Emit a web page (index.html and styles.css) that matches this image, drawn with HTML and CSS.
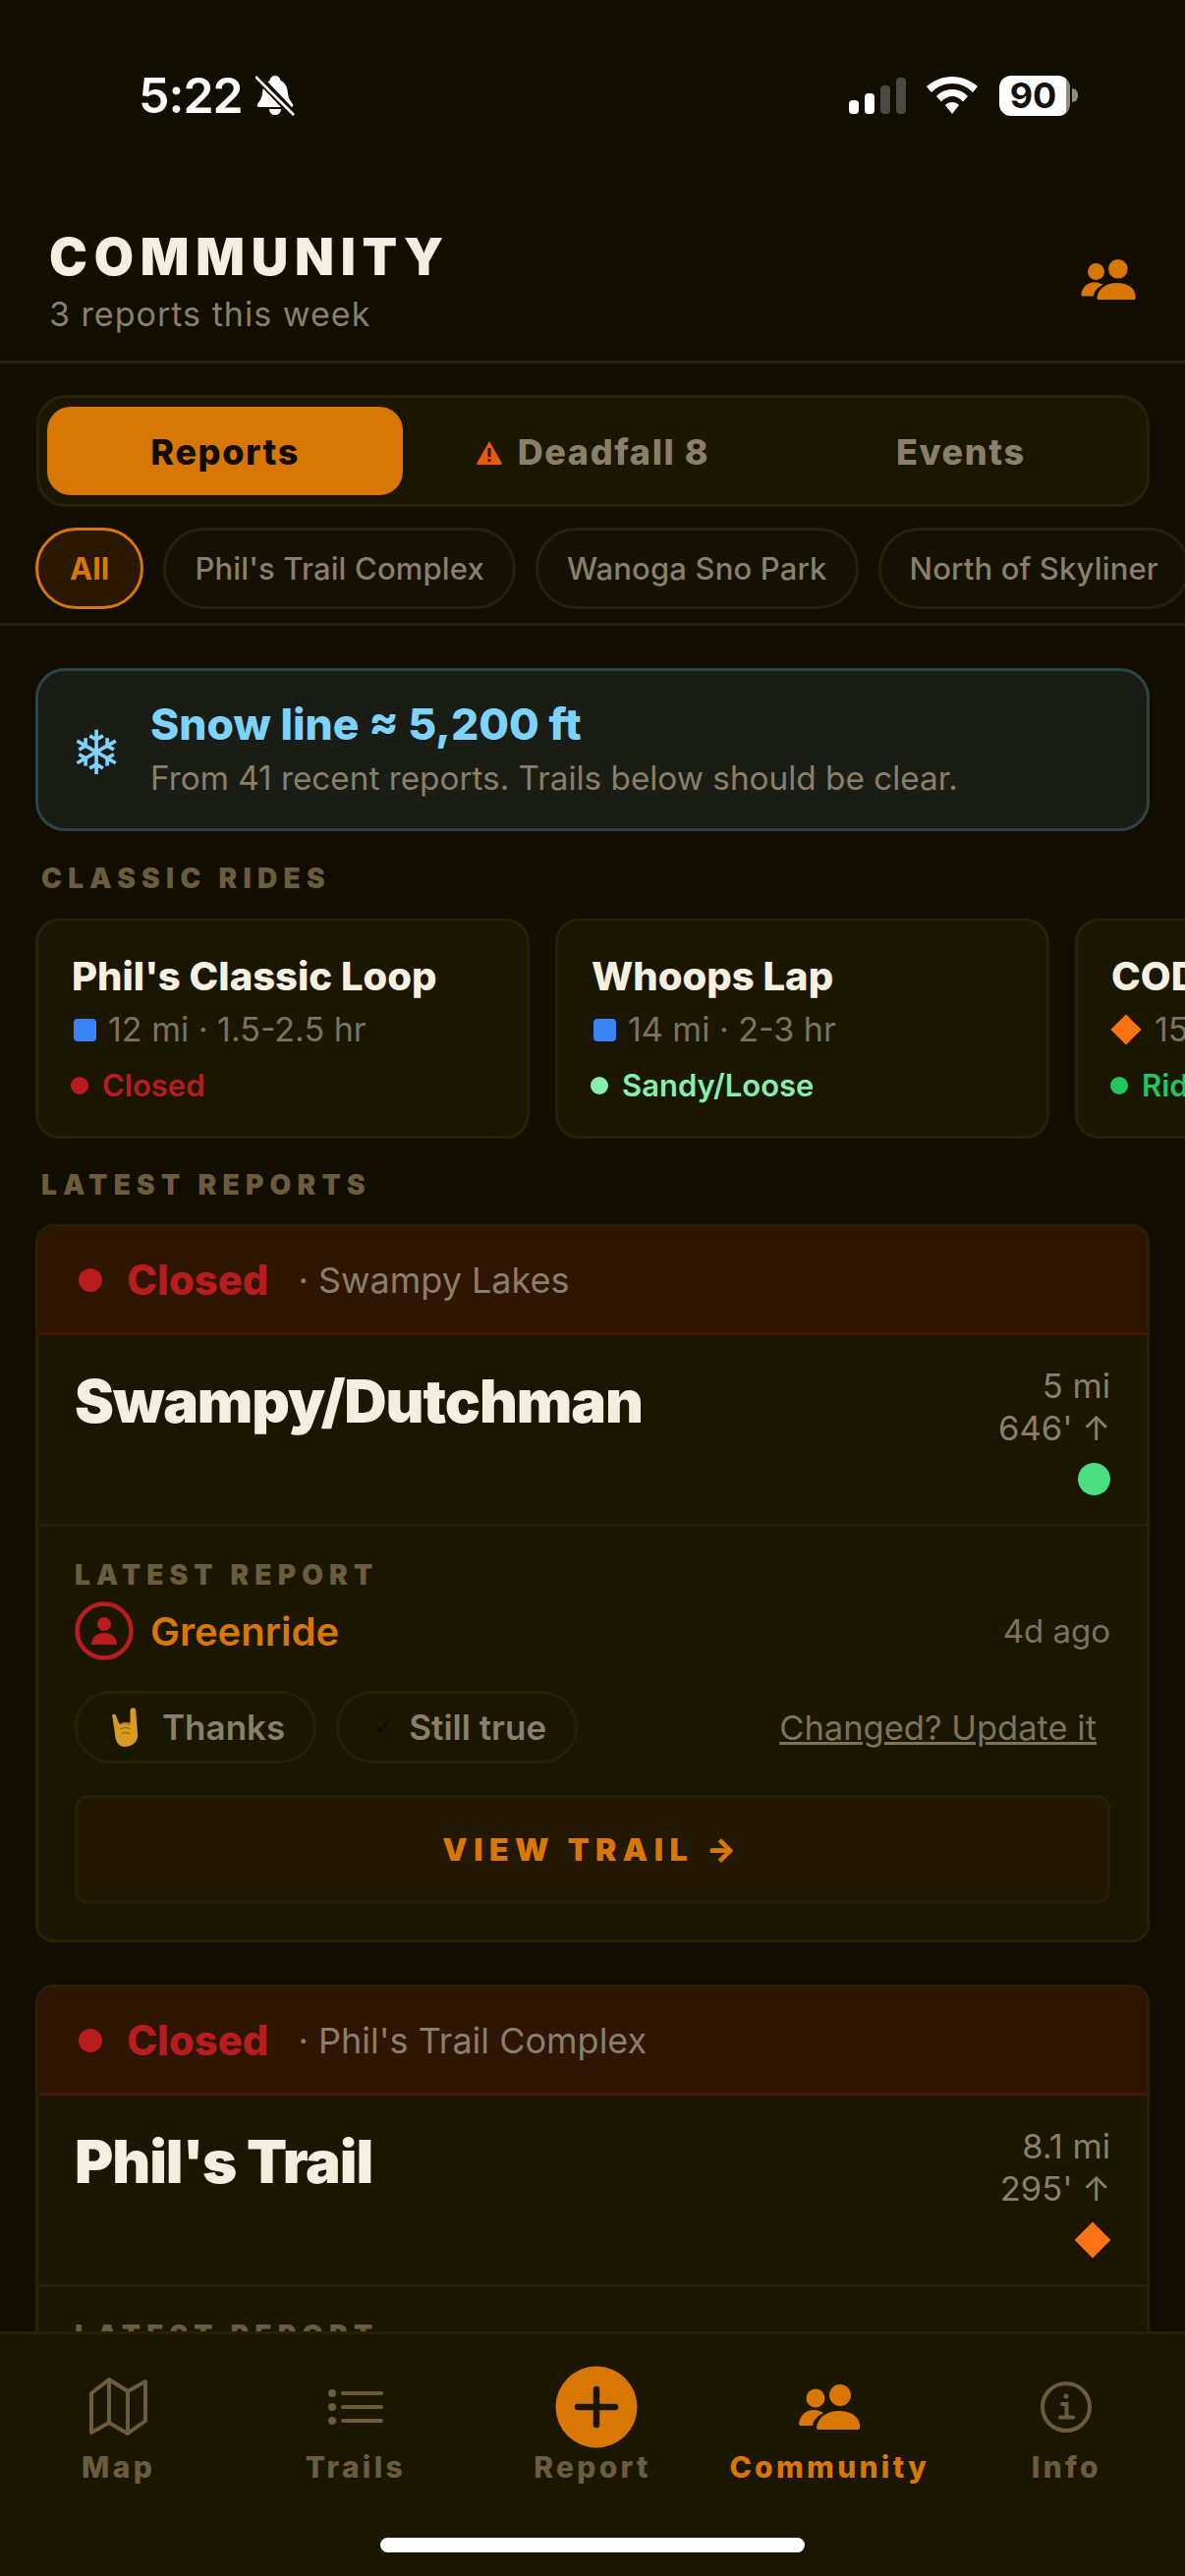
FILE: index.html
```html
<!DOCTYPE html>
<html lang="en">
<head>
<meta charset="UTF-8">
<meta name="viewport" content="width=device-width, initial-scale=1">
<title>Community</title>
<link rel="stylesheet" href="styles.css">
</head>
<body>
<div class="app">
	<div class="status">
		<div class="status-left">
			<span class="clock">5:22</span>
			<svg class="bell" width="40" height="42" viewBox="0 0 40 42"><path d="M20 1c3 0 5 2 5.500 5 5 2 7 7 7.500 13 .5 5 2 7 5 11 1 2 0 3-2 3H4c-2 0-3-1-2-3 3-4 4.500-6 5-11 .5-6 2.500-11 7.500-13C15 3 17 1 20 1zM14 35h12c0 4-3 6-6 6s-6-2-6-6z" fill="#fff"/><path d="M1 1l38 40" stroke="#120d01" stroke-width="8"/><path d="M0 2l39 39" stroke="#fff" stroke-width="2.600"/></svg>
		</div>
		<div class="status-right">
			<div class="signal"><i class="bar bar-1"></i><i class="bar bar-2"></i><i class="bar bar-3"></i><i class="bar bar-4"></i></div>
			<svg class="wifi" width="52" height="38" viewBox="0 0 52 38"><path d="M26 0c10 0 19 4 26 10l-5 6C41 10 34 7 26 7S11 10 5 16l-5-6C7 4 16 0 26 0z" fill="#fff"/><path d="M26 13c6 0 12 2.500 16 7l-5 5.500C34 22 30 20 26 20s-8 2-11 5.500L10 20c4-4.500 10-7 16-7z" fill="#fff"/><path d="M26 26c3 0 5 1 7 3l-7 9-7-9c2-2 4-3 7-3z" fill="#fff"/></svg>
			<div class="battery"><span class="battery-cell">90</span><i class="battery-nub"></i></div>
		</div>
	</div>

	<header class="head">
		<div>
			<h1 class="head-title">COMMUNITY</h1>
			<p class="head-sub">3 reports this week</p>
		</div>
		<svg class="head-icon" width="56" height="41" viewBox="0 0 62 46"><circle cx="17" cy="14" r="9.500"/><circle cx="42" cy="11" r="11"/><path d="M20 46c-1 0-2-1-2-2 1-10 10-17 23-17s22 7 21 17c0 1-1 2-2 2z"/><path d="M2 42c-1 0-2-1-2-2 1-8 7-14 15-14 4 0 7 1 10 3-6 3-10 7-11 13z"/></svg>
	</header>

	<div class="tabs">
		<div class="tab tab-on">Reports</div>
		<div class="tab"><svg class="warn" width="26" height="25" viewBox="0 0 26 25"><path d="M13 1l12.500 22c.5 1 0 2-1 2H1.500c-1 0-1.500-1-1-2z" fill="#ea580c"/><path d="M13 8v9" stroke="#2a1402" stroke-width="3"/><circle cx="13" cy="20.500" r="1.700" fill="#2a1402"/></svg>Deadfall 8</div>
		<div class="tab">Events</div>
	</div>

	<div class="chips">
		<div class="chip chip-on">All</div>
		<div class="chip">Phil's Trail Complex</div>
		<div class="chip">Wanoga Sno Park</div>
		<div class="chip">North of Skyliner</div>
	</div>

	<main class="feed">
		<section class="snow">
			<span class="snow-icon">❄</span>
			<div>
				<div class="snow-title">Snow line ≈ 5,200 ft</div>
				<div class="snow-sub">From 41 recent reports. Trails below should be clear.</div>
			</div>
		</section>

		<h2 class="label">CLASSIC RIDES</h2>
		<div class="rides">
			<div class="ride">
				<div class="ride-name">Phil's Classic Loop</div>
				<div class="ride-meta"><i class="blue-square"></i>12 mi · 1.5-2.5 hr</div>
				<div class="ride-status red"><i class="dot"></i>Closed</div>
			</div>
			<div class="ride">
				<div class="ride-name">Whoops Lap</div>
				<div class="ride-meta"><i class="blue-square"></i>14 mi · 2-3 hr</div>
				<div class="ride-status mint"><i class="dot"></i>Sandy/Loose</div>
			</div>
			<div class="ride">
				<div class="ride-name">COD Loop</div>
				<div class="ride-meta"><i class="small-diamond"></i>15 mi · 3-4 hr</div>
				<div class="ride-status green"><i class="dot"></i>Rideable</div>
			</div>
		</div>

		<h2 class="label label-reports">LATEST REPORTS</h2>

		<article class="report">
			<div class="report-head">
				<i class="report-dot"></i>
				<span class="report-state">Closed</span>
				<span class="report-area">· Swampy Lakes</span>
			</div>
			<div class="report-main">
				<div class="report-name">Swampy/Dutchman</div>
				<div class="report-stats">
					<div>5 mi</div>
					<div>646' ↑</div>
					<i class="grade-dot"></i>
				</div>
			</div>
			<div class="report-foot">
				<div class="foot-label">LATEST REPORT</div>
				<div class="author-row">
					<svg class="avatar" width="60" height="60" viewBox="0 0 60 60"><circle cx="30" cy="30" r="27.500" fill="none" stroke="#b91c1c" stroke-width="4.500"/><circle cx="30" cy="23" r="7" fill="#b91c1c"/><path d="M17 44c0-8 6-12 13-12s13 4 13 12z" fill="#b91c1c"/></svg>
					<span class="author">Greenride</span>
					<span class="ago">4d ago</span>
				</div>
				<div class="react-row">
					<div class="pill">
						<svg class="horns" width="27" height="40" viewBox="0 0 80 120"><path d="M0 25C0 19 8 18 11 24l11 26c10-5 22-6 33-3V8c1-10 17-10 17 0l6 77c0 23-20 35-40 35S8 100 8 75z" fill="#d89a20"/><path d="M24 52c10-5 22-5 30 0M24 66c10-5 24-5 32 0M28 80c8-4 18-4 26 0" fill="none" stroke="#9a6a10" stroke-width="4"/></svg>
						Thanks
					</div>
					<div class="pill"><span class="check">✓</span>Still true</div>
					<a class="update">Changed? Update it</a>
				</div>
				<div class="view-btn">VIEW TRAIL →</div>
			</div>
		</article>

		<article class="report report-next">
			<div class="report-head">
				<i class="report-dot"></i>
				<span class="report-state">Closed</span>
				<span class="report-area">· Phil's Trail Complex</span>
			</div>
			<div class="report-main">
				<div class="report-name">Phil's Trail</div>
				<div class="report-stats">
					<div>8.1 mi</div>
					<div>295' ↑</div>
					<i class="grade-diamond"></i>
				</div>
			</div>
			<div class="report-foot">
				<div class="foot-label">LATEST REPORT</div>
			</div>
		</article>
	</main>

	<nav class="nav">
		<div class="nav-item">
			<div class="nav-icon"><svg width="60" height="60" viewBox="0 0 60 60" fill="none" stroke="#6b5c3c" stroke-width="4" stroke-linejoin="round"><path d="M2 16L20 2l19 12L57 4v40L39 57 20 46 2 56zM20 2v44M39 14v43"/></svg></div>
			<span>Map</span>
		</div>
		<div class="nav-item">
			<div class="nav-icon"><svg width="56" height="38" viewBox="0 0 56 38" fill="#6b5c3c"><circle cx="4" cy="5" r="4"/><circle cx="4" cy="19" r="4"/><circle cx="4" cy="33" r="4"/><rect x="13" y="3" width="43" height="4" rx="2"/><rect x="13" y="17" width="43" height="4" rx="2"/><rect x="13" y="31" width="43" height="4" rx="2"/></svg></div>
			<span>Trails</span>
		</div>
		<div class="nav-item">
			<div class="nav-icon"><svg class="plus" width="84" height="84" viewBox="0 0 84 84"><circle cx="42" cy="42" r="41.500" fill="#d97706"/><path d="M42 24v36M23 42h38" stroke="#1b1602" stroke-width="6.500" stroke-linecap="round"/></svg></div>
			<span>Report</span>
		</div>
		<div class="nav-item nav-on">
			<div class="nav-icon"><svg class="people" width="62" height="46" viewBox="0 0 62 46"><circle cx="17" cy="14" r="9.500"/><circle cx="42" cy="11" r="11"/><path d="M20 46c-1 0-2-1-2-2 1-10 10-17 23-17s22 7 21 17c0 1-1 2-2 2z"/><path d="M2 42c-1 0-2-1-2-2 1-8 7-14 15-14 4 0 7 1 10 3-6 3-10 7-11 13z"/></svg></div>
			<span>Community</span>
		</div>
		<div class="nav-item">
			<div class="nav-icon"><svg width="52" height="52" viewBox="0 0 52 52" fill="none" stroke="#6b5c3c" stroke-width="4"><circle cx="26" cy="26" r="24"/><path d="M22 23h4.500v13M20 36.500h13" stroke-linecap="round"/><circle cx="26" cy="15" r="2.500" fill="#6b5c3c" stroke="none"/></svg></div>
			<span>Info</span>
		</div>
		<div class="home-bar"></div>
	</nav>
</div>
</body>
</html>
```

FILE: styles.css
```css
html, body { margin: 0; padding: 0; background: #120d01; color: #f5f0e1; font-family: "Inter", "Liberation Sans", sans-serif; }
.app { width: 1206px; height: 2622px; display: flex; flex-direction: column; overflow: hidden; }
i { display: block; }

/* status bar */
.status { height: 194px; flex: none; display: flex; justify-content: space-between; align-items: center; padding: 0 109px 0 141px; box-sizing: border-box; }
.status-left { display: flex; align-items: center; gap: 13px; }
.clock { color: #fff; font-size: 50px; font-weight: 600; line-height: 1; letter-spacing: -1px; }
.status-right { display: flex; align-items: center; }
.signal { display: flex; align-items: flex-end; gap: 6px; height: 37px; margin-right: 21px; }
.bar { width: 10px; border-radius: 4px; background: #fff; }
.bar-1 { height: 14px; }
.bar-2 { height: 21px; }
.bar-3 { height: 29px; background: #4a4a42; }
.bar-4 { height: 37px; background: #4a4a42; }
.wifi { margin-right: 22px; }
.battery { display: flex; align-items: center; gap: 2px; }
.battery-cell { width: 72px; height: 41px; border-radius: 12px; background: linear-gradient(to right, #fff 68px, #8c8c84 68px); color: #111; font-size: 36px; font-weight: 700; line-height: 41px; text-align: center; padding-right: 3px; box-sizing: border-box; }
.battery-nub { width: 6px; height: 14px; border-radius: 0 6px 6px 0; background: #8c8c84; }

/* header */
.head { height: 176px; flex: none; box-sizing: border-box; display: flex; justify-content: space-between; align-items: flex-start; padding: 38px 50px 0; border-bottom: 3px solid #2a1f06; }
.head-title { margin: 0; font-size: 52px; line-height: 60px; font-weight: 900; letter-spacing: 0.13em; color: #f3eee0; }
.head-sub { margin: 8px 0 0; font-size: 34px; line-height: 40px; color: #8a7f68; letter-spacing: 0.03em; }
.head-icon { margin-top: 32px; fill: #d97706; }

/* tabs */
.tabs { flex: none; display: flex; gap: 12px; box-sizing: border-box; height: 114px; margin: 32px 36px 0 37px; padding: 9px 8px; background: #1b1602; border: 3px solid #272005; border-radius: 30px; }
.tab { flex: 1; display: flex; align-items: center; justify-content: center; gap: 16px; padding-top: 2px; font-size: 36px; font-weight: 800; color: #8a7f68; border-radius: 24px; letter-spacing: 0.045em; }
.tab-on { background: #d97706; color: #120d01; }

.chips { flex: none; display: flex; gap: 20px; margin-top: 21px; padding: 0 0 14px 36px; border-bottom: 3px solid #2a1f06; overflow: hidden; }
.chip { flex: none; height: 83px; box-sizing: border-box; display: flex; align-items: center; padding: 0 29px; border: 3px solid #272005; border-radius: 42px; font-size: 31px; font-weight: 500; letter-spacing: 0.005em; color: #8a7f68; background: #141002; }
.chip-on { background: #2a1802; border-color: #d97706; color: #d97706; font-weight: 700; padding: 0 32px; }

/* feed */
.feed { flex: 1; min-height: 0; overflow: hidden; padding: 43px 36px 0; }
.snow { display: flex; align-items: center; height: 166px; box-sizing: border-box; padding: 0 0 0 28px; gap: 24px; background: #1a1c16; border: 3px solid #2b4449; border-radius: 30px; }
.snow-icon { width: 62px; text-align: center; font-family: "DejaVu Sans", sans-serif; font-size: 62px; line-height: 70px; color: #7dd3fc; margin-top: 8px; }
.snow-title { font-size: 44.400px; line-height: 52px; font-weight: 800; color: #7dd3fc; margin-top: -3px; }
.snow-sub { font-size: 33.300px; line-height: 40px; margin-top: 9px; color: #8a7f68; }

.label { margin: 35px 0 0 6px; font-size: 28px; line-height: 26px; font-weight: 900; letter-spacing: 0.225em; color: #6b5c3c; }
.rides { display: flex; gap: 26px; margin-top: 28px; }
.ride { flex: none; width: 503px; height: 224px; box-sizing: border-box; padding: 31px 34px 0; background: #1b1602; border: 3px solid #272005; border-radius: 24px; }
.ride-name { font-size: 40px; line-height: 50px; font-weight: 800; color: #f5f0e1; white-space: nowrap; }
.ride-meta { display: flex; align-items: center; gap: 14px; margin-top: 7px; font-size: 34px; line-height: 44px; color: #7d725c; white-space: nowrap; }
.blue-square { width: 23px; height: 23px; margin-left: 2px; margin-right: -2px; border-radius: 4px; background: #3b82f6; }
.small-diamond { width: 22px; height: 22px; margin: 0 4px; background: #f97316; transform: rotate(45deg); }
.ride-status { display: flex; align-items: center; gap: 14px; margin-top: 15px; font-size: 31px; line-height: 40px; font-weight: 600; margin-left: -1px; white-space: nowrap; }
.dot { width: 18px; height: 18px; border-radius: 50%; background: currentColor; }
.red { color: #b91c1c; }
.mint { color: #86efac; }
.green { color: #22c55e; }

.label-reports { margin-top: 34px; }

/* report card */
.report { margin-top: 27px; border: 3px solid #272005; border-radius: 18px; background: #1b1602; overflow: hidden; }
.report-next { margin-top: 43px; }
.report-head { height: 110px; box-sizing: border-box; display: flex; align-items: center; padding: 0 0 0 41px; background: #2f1503; border-bottom: 3px solid #4a1408; }
.report-dot { width: 24px; height: 24px; border-radius: 50%; background: #b91c1c; margin-right: 25px; }
.report-state { font-size: 41.800px; font-weight: 800; color: #b91c1c; margin-right: 30px; }
.report-area { font-size: 36px; color: #8a7f68; }
.report-main { height: 195px; box-sizing: border-box; display: flex; justify-content: space-between; padding: 30px 37px 0; border-bottom: 3px solid #272005; }
.report-name { font-size: 60px; line-height: 74px; font-weight: 900; letter-spacing: -0.018em; color: #f3eee0; }
.report-stats { display: flex; flex-direction: column; align-items: flex-end; font-size: 34.500px; line-height: 43px; color: #8a7f68; }
.grade-dot { width: 33px; height: 33px; border-radius: 50%; background: #4ade80; margin-top: 14px; }
.grade-diamond { width: 26px; height: 26px; background: #f97316; margin: 18px 5px 0 0; transform: rotate(45deg); }
.report-foot { padding: 37px 37px 36px; }
.foot-label { font-size: 28px; line-height: 24px; font-weight: 900; letter-spacing: 0.22em; color: #6b5c3c; }
.author-row { display: flex; align-items: center; margin-top: 15px; }
.avatar { margin-right: 17px; }
.author { font-size: 40px; font-weight: 600; color: #d97706; }
.ago { margin-left: auto; font-size: 33px; color: #7d725c; }
.react-row { display: flex; align-items: center; gap: 20px; margin-top: 31px; }
.pill { height: 74px; box-sizing: border-box; display: flex; align-items: center; gap: 24px; padding: 0 29px 0 35px; border: 3px solid #272005; border-radius: 37px; font-size: 35px; font-weight: 600; color: #8a7f68; }
.check { font-family: "DejaVu Sans", sans-serif; font-size: 24px; font-weight: 400; color: #0d0900; margin-right: -8px; }
.update { margin-left: auto; margin-right: 14px; font-size: 34.500px; color: #7d725c; text-decoration: underline; }
.view-btn { margin-top: 32px; height: 111px; box-sizing: border-box; display: flex; align-items: center; justify-content: center; background: #231803; border: 3px solid #272005; border-radius: 14px; font-size: 32px; font-weight: 900; letter-spacing: 0.2em; color: #d97706; }

/* bottom nav */
.nav { flex: none; height: 249px; box-sizing: border-box; position: relative; display: flex; background: #1b1602; border-top: 3px solid #272005; z-index: 1; }
.nav-item { flex: 1; display: flex; flex-direction: column; align-items: center; color: #6b5c3c; font-size: 30px; font-weight: 800; letter-spacing: 0.11em; }
.nav-icon { height: 84px; margin-top: 32px; display: flex; align-items: center; justify-content: center; }
.nav-item span { margin-top: 1px; line-height: 36px; }
.nav-on { color: #d97706; }
.plus { margin-left: 8px; }
.people { fill: #d97706; }
.home-bar { position: absolute; left: 387px; bottom: 24px; width: 432px; height: 15px; border-radius: 8px; background: #fff; }
```
